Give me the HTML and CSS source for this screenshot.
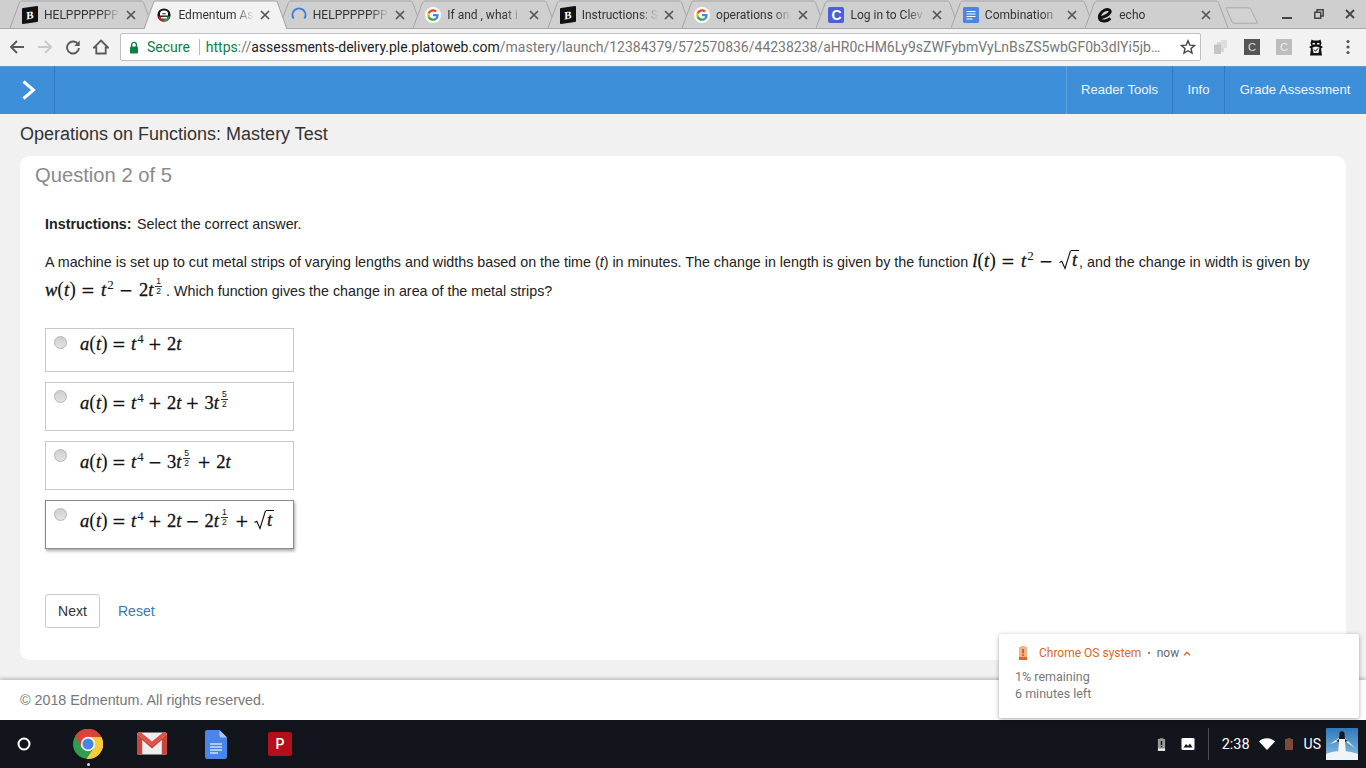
FILE: index.html
```html
<!DOCTYPE html>
<html lang="en">
<head>
<meta charset="utf-8">
<title>Edmentum Assessment</title>
<link rel="stylesheet" href="styles.css">
</head>
<body>
<svg class="defs" width="0" height="0" aria-hidden="true">
  <symbol id="tabshape" viewBox="0 0 143 28" preserveAspectRatio="none">
    <path d="M0 28 L9.5 2.5 C10 1.5 11 1 12 1 H131 C132 1 133 1.5 133.5 2.5 L143 28"/>
  </symbol>
  <symbol id="g" viewBox="0 0 48 48">
    <circle cx="24" cy="24" r="24" fill="#fff"/>
    <g transform="translate(6.5 6.5) scale(.73)">
    <path fill="#EA4335" d="M24 9.5c3.54 0 6.71 1.22 9.21 3.6l6.85-6.85C35.9 2.38 30.47 0 24 0 14.62 0 6.51 5.38 2.56 13.22l7.98 6.19C12.43 13.72 17.74 9.5 24 9.5z"/>
    <path fill="#4285F4" d="M46.98 24.55c0-1.57-.15-3.09-.38-4.55H24v9.02h12.94c-.58 2.96-2.26 5.48-4.78 7.18l7.73 6c4.51-4.18 7.09-10.36 7.09-17.65z"/>
    <path fill="#FBBC05" d="M10.53 28.59c-.48-1.45-.76-2.99-.76-4.59s.27-3.14.76-4.59l-7.98-6.19C.92 16.46 0 20.12 0 24c0 3.88.92 7.54 2.56 10.78l7.97-6.19z"/>
    <path fill="#34A853" d="M24 48c6.48 0 11.93-2.13 15.89-5.81l-7.73-6c-2.15 1.45-4.92 2.3-8.16 2.3-6.26 0-11.57-4.22-13.47-9.91l-7.98 6.19C6.51 42.62 14.62 48 24 48z"/>
    </g>
  </symbol>
  <symbol id="x" viewBox="0 0 10 10">
    <path d="M1 1 L9 9 M9 1 L1 9" fill="none" stroke="#555" stroke-width="1.7"/>
  </symbol>
  <symbol id="radical" viewBox="0 0 12 20" preserveAspectRatio="none">
    <path d="M0.5 12.5 L2.8 11.3 L6 18.5 L11.5 0.7" fill="none" stroke="#111" stroke-width="1.1"/>
  </symbol>
</svg>

<div class="screen">
  <header class="tabstrip">
    <div class="tab">
      <svg class="shape"><use href="#tabshape"/></svg>
      <span class="fav fav-b">B</span><span class="tab-title">HELPPPPPPP</span><svg class="tab-x"><use href="#x"/></svg>
    </div>
    <div class="tab active">
      <svg class="shape"><use href="#tabshape"/></svg>
      <svg class="fav" viewBox="0 0 16 16"><circle cx="8" cy="8" r="6.6" fill="#151515"/><path d="M1.8 9.5 A6.5 6.5 0 0 0 8 14.6 V9.5 Z" fill="#b5282e"/><path d="M8 9.5 V14.6 A6.5 6.5 0 0 0 14.2 9.5 Z" fill="#3d8a5a"/><path d="M4 6.8 A4 3.4 0 0 1 12 6.8 V8.6 H4 Z" fill="#fff"/><path d="M6.2 6.3 H9.8 V7.2 H6.2 Z" fill="#151515"/><path d="M5 10 H11 V11.4 H5 Z" fill="#fff"/></svg><span class="tab-title">Edmentum As</span><svg class="tab-x"><use href="#x"/></svg>
    </div>
    <div class="tab">
      <svg class="shape"><use href="#tabshape"/></svg>
      <svg class="fav" viewBox="0 0 16 16"><path d="M2.6 11.5 A6.5 6.5 0 1 1 13.4 11.5" fill="none" stroke="#3f7fdc" stroke-width="2"/></svg><span class="tab-title">HELPPPPPPP</span><svg class="tab-x"><use href="#x"/></svg>
    </div>
    <div class="tab">
      <svg class="shape"><use href="#tabshape"/></svg>
      <svg class="fav"><use href="#g"/></svg><span class="tab-title">If and , what i</span><svg class="tab-x"><use href="#x"/></svg>
    </div>
    <div class="tab">
      <svg class="shape"><use href="#tabshape"/></svg>
      <span class="fav fav-b">B</span><span class="tab-title">Instructions: S</span><svg class="tab-x"><use href="#x"/></svg>
    </div>
    <div class="tab">
      <svg class="shape"><use href="#tabshape"/></svg>
      <svg class="fav"><use href="#g"/></svg><span class="tab-title">operations on</span><svg class="tab-x"><use href="#x"/></svg>
    </div>
    <div class="tab">
      <svg class="shape"><use href="#tabshape"/></svg>
      <span class="fav fav-c">C</span><span class="tab-title">Log in to Clev</span><svg class="tab-x"><use href="#x"/></svg>
    </div>
    <div class="tab">
      <svg class="shape"><use href="#tabshape"/></svg>
      <svg class="fav" viewBox="0 0 16 16"><rect width="16" height="16" rx="1.5" fill="#4a86e0"/><path d="M3.5 4.5 H12.5 M3.5 7 H12.5 M3.5 9.5 H12.5 M3.5 12 H9.5" stroke="#fff" stroke-width="1.1"/></svg><span class="tab-title">Combination</span><svg class="tab-x"><use href="#x"/></svg>
    </div>
    <div class="tab">
      <svg class="shape"><use href="#tabshape"/></svg>
      <svg class="fav" viewBox="0 0 16 16"><path d="M2.8 11 C6.5 10 11.5 8 13 5.2 C13.8 3 11 1.6 7.8 3 C3.5 5 1.2 9.5 3 12.5 C5 15 10 14.5 13.4 11.4" fill="none" stroke="#111" stroke-width="3"/></svg><span class="tab-title">echo</span><svg class="tab-x"><use href="#x"/></svg>
    </div>
    <svg class="newtab" viewBox="0 0 34 17" preserveAspectRatio="none"><path d="M1 .8 H23 C25 .8 25.5 1.5 26 2.5 L32.5 16.2 H9 C8 16.2 7.5 15.8 7 15 Z" fill="#d2d2d2" stroke="#a9a9a9"/></svg>
    <div class="winctl">
      <svg viewBox="0 0 10 10"><path d="M0 9 H10" stroke="#444" stroke-width="2"/></svg>
      <svg viewBox="0 0 10 10"><path d="M3 3 V.8 H9.2 V7 H7 M.8 3.3 H6.7 V9.2 H.8 Z" fill="none" stroke="#444" stroke-width="1.5"/></svg>
      <svg viewBox="0 0 10 10"><path d="M1 1 L9 9 M9 1 L1 9" stroke="#444" stroke-width="1.8"/></svg>
    </div>
  </header>

  <nav class="toolbar">
    <svg class="navbtn" viewBox="0 0 16 16"><path d="M15 8 H2.5 M8 2 L2 8 L8 14" fill="none" stroke="#5a5a5a" stroke-width="1.9"/></svg>
    <svg class="navbtn" viewBox="0 0 16 16"><path d="M1 8 H13.5 M8 2 L14 8 L8 14" fill="none" stroke="#c9c9c9" stroke-width="1.9"/></svg>
    <svg class="navbtn" viewBox="0 0 16 16"><path d="M13.2 5.5 A6 6 0 1 0 14 9" fill="none" stroke="#5a5a5a" stroke-width="1.9"/><path d="M14.7 1.6 V7 H9.3 Z" fill="#5a5a5a"/></svg>
    <svg class="navbtn" viewBox="0 0 16 16"><path d="M8 1.5 L15 8.5 H12.7 V14.5 H3.3 V8.5 H1 Z" fill="none" stroke="#5a5a5a" stroke-width="1.8"/></svg>
    <div class="omnibox">
      <svg class="lock" viewBox="0 0 10 13"><path d="M2.6 6 V3.8 A2.4 2.4 0 0 1 7.4 3.8 V6" fill="none" stroke="#0b8043" stroke-width="1.3"/><rect x="1" y="5.5" width="8" height="7" rx="1" fill="#0b8043"/></svg>
      <span class="secure">Secure</span>
      <span class="sep"></span>
      <span class="url"><span class="scheme">https</span><span class="path">://</span><span class="host">assessments-delivery.ple.platoweb.com</span><span class="path">/mastery/launch/12384379/572570836/44238238/aHR0cHM6Ly9sZWFybmVyLnBsZS5wbGF0b3dlYi5jb…</span></span>
      <svg class="star" viewBox="0 0 16 16"><path d="M8 1.8 L9.8 6.1 L14.5 6.5 L11 9.5 L12 14.1 L8 11.7 L4 14.1 L5 9.5 L1.5 6.5 L6.2 6.1 Z" fill="none" stroke="#444" stroke-width="1.4"/></svg>
    </div>
    <div class="exts">
      <svg class="ext" viewBox="0 0 16 16"><path d="M5 3 H12 V13 H5 Z" fill="#d6d6d6"/><path d="M2 5.5 H9 V15 H2 Z" fill="#c4c4c4"/><path d="M9 1 H15 V9 H9 Z" fill="#dedede"/></svg>
      <span class="ext ext-c dark">C</span>
      <span class="ext ext-c light">C</span>
      <svg class="ext ext-fig" viewBox="0 0 16 18"><path d="M3.5 1 L5.5 2 H10.5 L12.5 1 L13.5 5 L12.5 7 L15 8.5 L13 10 L14 17 H2 L3 10 L1 8.5 L3.5 7 L2.5 5 Z" fill="#111"/><path d="M4.5 4.5 H7 V6 H4.5 Z M9 4.5 H11.5 V6 H9 Z" fill="#eee"/><path d="M4.5 9 L8 8 L11.5 9 L10.5 14.5 H5.5 Z" fill="#eee"/><path d="M6 11 L7.5 12.8 L10 9.8" fill="none" stroke="#111" stroke-width="1"/></svg>
      <svg class="ext ext-menu" viewBox="0 0 4 16"><circle cx="2" cy="2.5" r="1.6" fill="#555"/><circle cx="2" cy="8" r="1.6" fill="#555"/><circle cx="2" cy="13.5" r="1.6" fill="#555"/></svg>
    </div>
  </nav>

  <div class="appbar">
    <button class="menu-toggle" type="button" aria-label="Open menu">
      <svg viewBox="0 0 16 22"><path d="M2.5 2.5 L12.5 11 L2.5 19.5" fill="none" stroke="#fff" stroke-width="3"/></svg>
    </button>
    <div class="appnav">
      <a class="appnav-item reader">Reader Tools</a>
      <a class="appnav-item info">Info</a>
      <a class="appnav-item grade">Grade Assessment</a>
    </div>
  </div>

  <main class="page">
    <h1 class="test-title">Operations on Functions: Mastery Test</h1>
    <section class="card">
      <h2 class="question-no">Question 2 of 5</h2>
      <p class="instructions"><b>Instructions:</b> Select the correct answer.</p>
      <p class="stem">A machine is set up to cut metal strips of varying lengths and widths based on the time (<i>t</i>) in minutes. The change in length is given by the function <span class="math stem-math"><i>l</i><span class="par">(</span><i>t</i><span class="par">)</span><span class="op">=</span><i>t</i><sup>2</sup><span class="op">−</span><span class="sqrt"><svg class="rad"><use href="#radical"/></svg><i class="rad-body">t</i></span></span>, and the change in width is given by <span class="math stem-math"><i>w</i><span class="par">(</span><i>t</i><span class="par">)</span><span class="op">=</span><i>t</i><sup>2</sup><span class="op">−</span>2<i>t</i><span class="frac"><span class="num">1</span><span class="den">2</span></span></span> . Which function gives the change in area of the metal strips?</p>

      <div class="options">
        <label class="option short"><span class="radio"></span><span class="math"><i>a</i><span class="par">(</span><i>t</i><span class="par">)</span><span class="op">=</span><i>t</i><sup>4</sup><span class="op">+</span>2<i>t</i></span></label>
        <label class="option"><span class="radio"></span><span class="math"><i>a</i><span class="par">(</span><i>t</i><span class="par">)</span><span class="op">=</span><i>t</i><sup>4</sup><span class="op">+</span>2<i>t</i><span class="op">+</span>3<i>t</i><span class="frac"><span class="num">5</span><span class="den">2</span></span></span></label>
        <label class="option"><span class="radio"></span><span class="math"><i>a</i><span class="par">(</span><i>t</i><span class="par">)</span><span class="op">=</span><i>t</i><sup>4</sup><span class="op">−</span>3<i>t</i><span class="frac"><span class="num">5</span><span class="den">2</span></span><span class="op">+</span>2<i>t</i></span></label>
        <label class="option selected"><span class="radio"></span><span class="math"><i>a</i><span class="par">(</span><i>t</i><span class="par">)</span><span class="op">=</span><i>t</i><sup>4</sup><span class="op">+</span>2<i>t</i><span class="op">−</span>2<i>t</i><span class="frac"><span class="num">1</span><span class="den">2</span></span><span class="op">+</span><span class="sqrt"><svg class="rad"><use href="#radical"/></svg><i class="rad-body">t</i></span></span></label>
      </div>

      <div class="actions">
        <button class="btn-next" type="button">Next</button>
        <a class="reset">Reset</a>
      </div>
    </section>
  </main>

  <footer class="footer">© 2018 Edmentum. All rights reserved.</footer>

  <div class="shelf">
    <svg class="launcher" viewBox="0 0 14 14"><circle cx="7" cy="7" r="5.5" fill="none" stroke="#fff" stroke-width="2"/></svg>
    <div class="apps">
      <div class="app running">
        <svg viewBox="0 0 30 30"><circle cx="15" cy="15" r="15" fill="#2f9e51"/><path d="M15 8 H28.4 A15 15 0 0 0 2.2 7.1 L8.9 18.5 Z" fill="#d9433a"/><path d="M28.4 8 A15 15 0 0 1 13.5 29.9 L21 18.5 L15 8 Z" fill="#f7cb3e"/><circle cx="15" cy="15" r="7.2" fill="#fff"/><circle cx="15" cy="15" r="5.6" fill="#4a84e4"/></svg>
      </div>
      <div class="app">
        <svg viewBox="0 0 30 24"><rect y="0.5" width="30" height="22" rx="1.5" fill="#eeeeee"/><path d="M0 2 L15 13.5 L30 2 V21 A1.5 1.5 0 0 1 28.5 22.5 H24.8 V8 L15 16.5 L5.2 8 V22.5 H1.5 A1.5 1.5 0 0 1 0 21 Z" fill="#c9443a"/><path d="M0 2 A1.5 1.5 0 0 1 1.5 .5 H4 L15 9.5 L26 .5 H28.5 A1.5 1.5 0 0 1 30 2 L15 13.5 Z" fill="#dc5047"/></svg>
      </div>
      <div class="app">
        <svg viewBox="0 0 22 29"><path d="M2 0 H14.5 L22 7.5 V27 A2 2 0 0 1 20 29 H2 A2 2 0 0 1 0 27 V2 A2 2 0 0 1 2 0 Z" fill="#4a86e8"/><path d="M14.5 0 L22 7.5 H16 A1.5 1.5 0 0 1 14.5 6 Z" fill="#a9c6f5"/><path d="M5 14 H17 M5 17 H17 M5 20 H17 M5 23 H13" stroke="#cfe0fb" stroke-width="1.3"/></svg>
      </div>
      <div class="app"><span class="app-p">P</span></div>
    </div>
    <div class="tray">
      <svg class="tray-batt" viewBox="0 0 10 16"><path d="M3 1 H7 V2 H9 V15 H1 V2 H3 Z" fill="#9a9a9a"/><path d="M1 12.5 H9 V15 H1 Z" fill="#eee"/><path d="M4.2 4 H5.8 V8.5 H4.2 Z M4.2 9.6 H5.8 V11 H4.2 Z" fill="#111"/></svg>
      <svg class="tray-img" viewBox="0 0 14 12"><rect width="13" height="12" x=".5" rx="1.2" fill="#fff"/><path d="M2.5 9.5 L5 6 L7 8 L9 5.5 L11.5 9.5 Z" fill="#14171d"/></svg>
      <span class="tray-sep"></span>
      <span class="clock">2:38</span>
      <svg class="tray-wifi" viewBox="0 0 16 12"><path d="M0 3.5 C4 -0.8 12 -0.8 16 3.5 L8 12 Z" fill="#fff"/></svg>
      <svg class="tray-low" viewBox="0 0 8 12"><path d="M2.5 0 H5.5 V1 H8 V12 H0 V1 H2.5 Z" fill="#7e4a40"/></svg>
      <span class="locale">US</span>
      <svg class="avatar" viewBox="0 0 32 32"><defs><linearGradient id="sky" x1="0" y1="0" x2="0" y2="1"><stop offset="0" stop-color="#2f78b8"/><stop offset="1" stop-color="#8cc0e4"/></linearGradient></defs><rect width="32" height="32" rx="1" fill="url(#sky)"/><path d="M0 26 C8 22 22 22 32 26 V32 H0 Z" fill="#eef5fa"/><path d="M13 10 L4 16 L13 13 L12 26 H20 L19 13 L29 20 L19 10 Z" fill="#f4f4f0"/><path d="M13.5 6.5 A2.6 2.6 0 1 1 18.5 6.5 L19 11 H13 Z" fill="#15171b"/><path d="M19 11 L22 13 L19 14 Z M13 11 L10 13 L13 14 Z" fill="#2a2d33"/></svg>
    </div>
  </div>

  <aside class="toast">
    <div class="toast-head">
      <svg class="toast-icon" viewBox="0 0 10 16"><path d="M3 1 H7 V2 H9 V15 H1 V2 H3 Z" fill="#f0b48a"/><path d="M1 12 H9 V15 H1 Z" fill="#df6a1f"/><path d="M4.2 4 H5.8 V8.5 H4.2 Z M4.2 9.4 H5.8 V11 H4.2 Z" fill="#c9500f"/></svg>
      <span class="toast-app">Chrome OS system</span>
      <span class="toast-dot">•</span>
      <span class="toast-time">now</span>
      <svg class="toast-caret" viewBox="0 0 8 5"><path d="M1 4.2 L4 1.2 L7 4.2" fill="none" stroke="#d9691f" stroke-width="1.3"/></svg>
    </div>
    <div class="toast-body">1% remaining<br>6 minutes left</div>
  </aside>
</div>
</body>
</html>
```

FILE: styles.css
```css
* { box-sizing: border-box; }
html, body { margin: 0; padding: 0; }
body { width: 1366px; height: 768px; overflow: hidden; font-family: "Liberation Sans", Arial, sans-serif; background: #f1f1f1; }
.defs { position: absolute; }
.screen { position: relative; width: 1366px; height: 768px; display: flex; flex-direction: column; }

/* tab strip */
.tabstrip { height: 28px; flex: none; display: flex; align-items: stretch; background: #cfcfcf; padding-left: 10px; font-family: Roboto, sans-serif; position: relative; z-index: 2; }
.tab { position: relative; width: 143px; margin-right: -8.6px; display: flex; align-items: center; padding-left: 12px; flex: none; }
.shape { position: absolute; left: 0; top: 0; width: 100%; height: 100%; fill: #cfcfcf; stroke: #a6a6a6; stroke-width: 1; overflow: visible; }
.tab.active { z-index: 2; height: 29px; padding-bottom: 1px; }
.tab.active .shape { fill: #f2f2f2; }
.fav { position: relative; width: 16px; height: 16px; flex: none; margin-top: 2px; }
.fav-b { background: #111; color: #fff; font: bold 11px/16px "Liberation Serif", serif; text-align: center; border-radius: 1px; transform: skewY(-8deg); }
.fav-c { background: #4a5fd8; color: #fff; font: bold 14px/16px "Liberation Sans", sans-serif; text-align: center; border-radius: 2px; }
.tab-title { position: relative; width: 76px; margin-left: 6px; margin-top: 2px; font-size: 12px; color: #333; white-space: nowrap; overflow: hidden; -webkit-mask-image: linear-gradient(to right, #000 75%, transparent 100%); mask-image: linear-gradient(to right, #000 75%, transparent 100%); }
.tab-x { position: relative; width: 10px; height: 10px; margin-left: 6px; margin-top: 2px; flex: none; }
.newtab { width: 34px; height: 17px; margin-left: 5.4px; margin-top: 7px; flex: none; }
.winctl { margin-left: auto; display: flex; align-items: center; gap: 21.5px; padding-right: 11px; }
.winctl svg { width: 10px; height: 10px; }

/* toolbar */
.toolbar { height: 38px; flex: none; background: #f2f2f2; display: flex; align-items: center; padding: 0 0 1px 9px; font-family: Roboto, sans-serif; border-top: 1px solid #a9a9a9; }
.navbtn { width: 16px; height: 16px; margin-right: 12px; flex: none; }
.omnibox { width: 1081px; height: 28px; margin-left: -1px; background: #fff; border: 1px solid #c0c0c0; border-radius: 2px; display: flex; align-items: center; padding-left: 8px; flex: none; }
.lock { width: 10px; height: 13px; flex: none; }
.secure { margin-left: 8px; font-size: 14px; color: #0b8043; }
.sep { width: 1px; height: 16px; background: #bbb; margin: 0 6px 0 9px; flex: none; }
.url { flex: 1; min-width: 0; font-size: 14px; white-space: nowrap; overflow: hidden; color: #777; }
.scheme { color: #0b8043; }
.host { color: #222; }
.star { width: 16px; height: 16px; margin: 0 4px 0 7px; flex: none; }
.exts { display: flex; align-items: center; gap: 16px; margin-left: 11px; }
.ext { width: 16px; height: 16px; flex: none; }
.ext-fig { height: 19px; }
.ext-c { font: 11px/16px "Liberation Sans", sans-serif; text-align: center; color: #ddd; }
.ext-c.dark { background: #555; }
.ext-c.light { background: #bdbdbd; color: #eee; }
.ext-menu { width: 4px; margin-left: 6px; }

/* app bar */
.appbar { height: 48px; flex: none; background: #3d8fd9; display: flex; justify-content: space-between; box-shadow: inset 0 1px 0 #5b9ad0; }
.menu-toggle { width: 55px; padding: 0 0 0 21px; border: 0; border-right: 1px solid #2f7cc3; background: none; display: flex; align-items: center; }
.menu-toggle svg { width: 16px; height: 22px; }
.appnav { display: flex; }
.appnav-item { color: #f0f6fc; font-size: 13.1px; line-height: 47px; text-align: center; border-left: 1px solid #2f7cc3; }
.appnav-item.reader { width: 106px; border-left-color: #5ba0df; }
.appnav-item.info { width: 52px; }
.appnav-item.grade { width: 142px; padding-right: 1px; }

/* page */
.page { flex: 1; padding: 0 20px; background: #f1f1f1; min-height: 0; }
.test-title { margin: 0; height: 42px; font-size: 18px; font-weight: 400; line-height: 40px; color: #333; }
.card { height: 504px; background: #fff; border-radius: 10px; padding: 0 25px; }
.question-no { margin: 0 0 0 -10px; font-size: 20.2px; font-weight: 400; line-height: 38px; color: #8a8a8a; height: 58px; }
.instructions { margin: 0; font-size: 14.3px; line-height: 20px; color: #222; }
.instructions b { margin-right: 1.5px; }
.stem { margin: 14px 0 0; height: 58px; font-size: 14.3px; line-height: 29px; color: #222; white-space: normal; }
.stem i { font-family: "Liberation Sans", sans-serif; }

/* maths */
.math { font-family: "Liberation Serif", serif; font-size: 18.5px; color: #111; white-space: nowrap; -webkit-text-stroke: .3px #111; }
.stem .math { line-height: 0; }
.math i, .stem .math i { font-family: "Liberation Serif", serif; font-style: italic; }
.par { font-size: 20px; -webkit-text-stroke: 0; }
.op { font-family: "DejaVu Sans", sans-serif; font-size: 17px; margin: 0 5px 0 4px; -webkit-text-stroke: 0; }
.stem-math .op { margin: 0 6px 0 5px; }
.math sup { font-size: 13px; line-height: 0; vertical-align: 7px; margin-left: 1px; -webkit-text-stroke: 0; }
.frac { display: inline-flex; flex-direction: column; align-items: center; vertical-align: 12px; margin: -8px 3px -8px 2px; font-size: 8.5px; line-height: 9px; -webkit-text-stroke: 0; font-family: "Liberation Sans", sans-serif; }
.stem-math .frac { margin-right: 0; }
.num { border-bottom: 1px solid #333; padding: 0 1px; }
.den { line-height: 9px; }
.sqrt { display: inline-flex; align-items: flex-end; vertical-align: -3px; height: 20px; margin: -4px 0; }
.rad { width: 12px; height: 20px; flex: none; }
.rad-body { border-top: 1px solid #111; line-height: 19px; height: 20px; padding: 0 2px 0 1px; }

/* options */
.options { margin-top: 22px; display: flex; flex-direction: column; gap: 10px; width: 249px; }
.option { height: 49px; border: 1px solid #c8c8c8; display: flex; align-items: flex-start; padding: 7px 0 0 8px; background: #fff; }
.option.short { height: 44px; }
.option.selected { border-color: #8a8a8a; box-shadow: 1px 2px 3px rgba(0,0,0,.35); }
.radio { width: 13px; height: 13px; border-radius: 50%; background: linear-gradient(#cfcfcf, #e3e3e3); border: 1px solid #b5b5b5; flex: none; margin-right: 13px; }
.option .math { line-height: 22px; margin-top: 1px; }
.option.short .math { margin-top: -4px; }

/* actions */
.actions { margin-top: 45px; display: flex; align-items: center; gap: 18px; }
.btn-next { width: 55px; height: 34px; background: #fff; border: 1px solid #ccc; border-radius: 3px; font: 14px "Liberation Sans", sans-serif; color: #333; padding: 0; }
.reset { font-size: 14px; color: #337ab7; }

/* footer + shelf */
.footer { height: 40px; flex: none; background: #fff; padding-left: 20px; font-size: 14.3px; line-height: 40px; color: #777; box-shadow: 0 -2px 3px rgba(0,0,0,.2); position: relative; }
.shelf { height: 48px; flex: none; background: #12151b; display: flex; align-items: center; padding-left: 17px; position: relative; }
.launcher { width: 14px; height: 14px; flex: none; }
.apps { display: flex; align-items: center; margin-left: 25px; }
.app { width: 64px; height: 32px; display: flex; align-items: center; justify-content: center; position: relative; }
.app:first-child svg { width: 30px; height: 30px; }
.app:nth-child(2) svg { width: 30px; height: 24px; }
.app:nth-child(3) svg { width: 22px; height: 29px; }
.app.running::after { content: ""; position: absolute; left: 31px; bottom: -6px; width: 3px; height: 3px; border-radius: 50%; background: #ddd; }
.app-p { width: 24px; height: 24px; background: #b4101c; color: #fff; border-radius: 2px; font: 500 14px/24px Roboto, sans-serif; text-align: center; }
.tray { margin-left: auto; display: flex; align-items: center; padding-right: 8px; font-family: Roboto, sans-serif; color: #fff; font-size: 14px; }
.tray-batt { width: 9px; height: 15px; }
.tray-img { width: 14px; height: 12px; margin-left: 15px; }
.tray-sep { width: 1px; height: 32px; background: #4a4d52; margin: 0 13px 0 13px; }
.clock { font-size: 14.5px; }
.tray-wifi { width: 16px; height: 12px; margin-left: 9px; }
.tray-low { width: 8px; height: 12px; margin-left: 10px; }
.locale { margin-left: 11px; font-size: 14px; }
.avatar { width: 32px; height: 32px; margin-left: 5px; }

/* notification */
.toast { position: absolute; left: 999px; top: 634px; width: 360px; height: 84px; background: #fff; border-radius: 2px; box-shadow: 0 1px 4px rgba(0,0,0,.35); font-family: Roboto, sans-serif; padding: 10px 0 0 16px; }
.toast-head { display: flex; align-items: center; height: 18px; font-size: 12px; }
.toast-icon { width: 10px; height: 16px; margin-left: 3px; flex: none; }
.toast-app { margin-left: 11px; color: #d9691f; }
.toast-dot { margin: 0 6px; color: #777; font-size: 10px; }
.toast-time { color: #666; }
.toast-caret { width: 8px; height: 5px; margin-left: 4px; }
.toast-body { margin-top: 6px; font-size: 12.5px; line-height: 17px; color: #777; }
```
